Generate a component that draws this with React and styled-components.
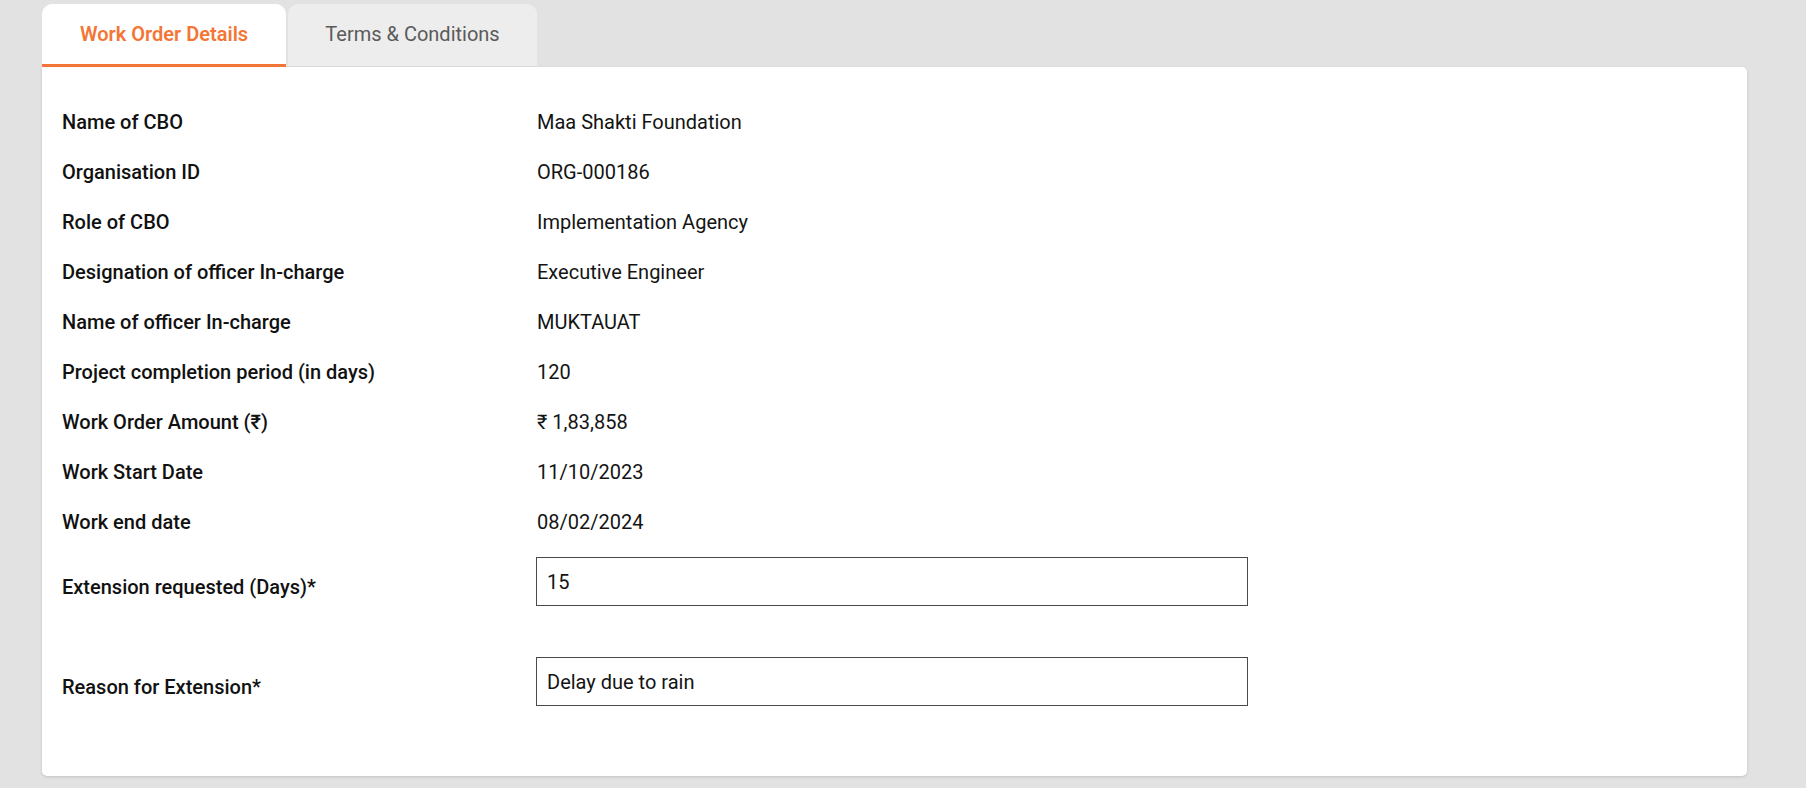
import styled, { createGlobalStyle } from "styled-components";

const GlobalStyle = createGlobalStyle`
  html, body {
    margin: 0;
    padding: 0;
    background: #e2e2e2;
    font-family: Roboto, "Liberation Sans", sans-serif;
  }
`;

const Page = styled.div`
  padding: 4px 59px 12px 42px;
`;

const Tabs = styled.div`
  display: flex;
  gap: 2px;
  align-items: flex-end;
`;

const Tab = styled.button`
  box-sizing: border-box;
  height: 63px;
  width: ${(p) => p.$width}px;
  padding: 0 0 ${(p) => (p.$active ? 0 : 2)}px;
  border: none;
  border-radius: 10px 10px 0 0;
  border-bottom: ${(p) => (p.$active ? "3px solid #f47636" : "1px solid #d9d9d9")};
  background: ${(p) => (p.$active ? "#ffffff" : "#ededed")};
  color: ${(p) => (p.$active ? "#f47636" : "#5a5a5a")};
  font-family: Roboto, "Liberation Sans", sans-serif;
  font-size: 20px;
  font-weight: ${(p) => (p.$active ? 600 : 400)};
  cursor: pointer;
`;

const Card = styled.div`
  box-sizing: border-box;
  background: #ffffff;
  border-radius: 0 5px 5px 5px;
  box-shadow: 0 1px 3px rgba(0, 0, 0, 0.14);
  padding: 30px 20px 70px;
  min-height: 709px;
`;

const DetailRow = styled.div`
  display: grid;
  grid-template-columns: 475px 1fr;
  align-items: center;
  height: 50px;
`;

const Label = styled.div`
  font-size: 20px;
  font-weight: 500;
  color: #111111;
  padding-top: ${(p) => (p.$shift ? 10 : 0)}px;
`;

const Value = styled.div`
  font-size: 20px;
  color: #141414;
`;

const FieldRow = styled.div`
  display: grid;
  grid-template-columns: 474px 712px;
  align-items: center;
  margin-top: ${(p) => p.$gap}px;
`;

const Input = styled.input`
  box-sizing: border-box;
  height: 49px;
  width: 712px;
  border: 1px solid #4a4a4a;
  border-radius: 0;
  padding: 0 10px;
  font-family: Roboto, "Liberation Sans", sans-serif;
  font-size: 20px;
  color: #141414;
  background: #ffffff;
  outline: none;
`;

const details = [
  ["Name of CBO", "Maa Shakti Foundation"],
  ["Organisation ID", "ORG-000186"],
  ["Role of CBO", "Implementation Agency"],
  ["Designation of officer In-charge", "Executive Engineer"],
  ["Name of officer In-charge", "MUKTAUAT"],
  ["Project completion period (in days)", "120"],
  ["Work Order Amount (₹)", "₹ 1,83,858"],
  ["Work Start Date", "11/10/2023"],
  ["Work end date", "08/02/2024"],
];

const App = () => {
  return (
    <Page>
      <GlobalStyle />
      <Tabs>
        <Tab $active $width={244}>Work Order Details</Tab>
        <Tab $width={249}>Terms &amp; Conditions</Tab>
      </Tabs>
      <Card>
        {details.map(([label, value]) => (
          <DetailRow key={label}>
            <Label>{label}</Label>
            <Value>{value}</Value>
          </DetailRow>
        ))}
        <FieldRow $gap={10}>
          <Label $shift>Extension requested (Days)*</Label>
          <Input defaultValue="15" />
        </FieldRow>
        <FieldRow $gap={51}>
          <Label $shift>Reason for Extension*</Label>
          <Input defaultValue="Delay due to rain" />
        </FieldRow>
      </Card>
    </Page>
  );
};

export default App;
